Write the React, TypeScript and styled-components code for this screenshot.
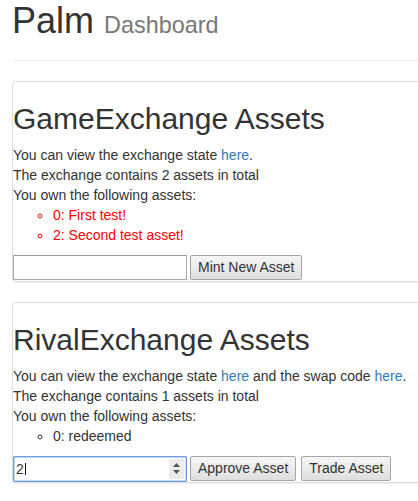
import React from "react";
import styled, { createGlobalStyle } from "styled-components";

const Global = createGlobalStyle`
  html, body { margin: 0; padding: 0; background: #fff; overflow: hidden; }
  body {
    font-family: "Liberation Sans", Arial, Helvetica, sans-serif;
    font-size: 14px;
    line-height: 20px;
    color: #333;
  }
  * { box-sizing: border-box; }
`;

const Container = styled.div`
  width: 760px;
  padding: 0 12px;
`;

const PageHeader = styled.div`
  padding-bottom: 9px;
  margin: 1px 0 20px;
  border-bottom: 1px solid #eee;
`;

const Title = styled.h1`
  margin: 0 0 10px;
  font-size: 36px;
  line-height: 1.1;
  font-weight: 500;
  color: #333;
`;

const Subtitle = styled.small`
  font-size: 65%;
  font-weight: 400;
  color: #777;
`;

const Panel = styled.section`
  background: #fff;
  border: 1px solid #ddd;
  border-radius: 4px;
  box-shadow: 0 1px 1px rgba(0, 0, 0, 0.05);
  margin-bottom: 20px;
`;

const PanelTitle = styled.h2`
  margin: 20px 0 10px;
  font-size: 30px;
  line-height: 1.1;
  font-weight: 500;
  color: #333;
`;

const Line = styled.div`
  line-height: 20px;
`;

const Link = styled.a`
  color: #337ab7;
  text-decoration: none;
`;

const AssetList = styled.ul`
  margin: 0 0 10px;
  padding-left: 40px;
  list-style-type: circle;
`;

const AssetItem = styled.li<{ $alert?: boolean }>`
  color: ${(p) => (p.$alert ? "#ff0000" : "#333")};
  line-height: 20px;
`;

const Controls = styled.div`
  display: flex;
  align-items: flex-start;
  height: 26px;
`;

const TextInput = styled.input`
  width: 174px;
  height: 25px;
  margin: 0 3px 0 0;
  padding: 1px 2px;
  border: 1px solid #a9a9a9;
  border-top-color: #999;
  font: inherit;
  color: #333;
  background: #fff;
  outline: none;
`;

const NumberBox = styled.div`
  width: 174px;
  height: 26px;
  margin-right: 3px;
  display: flex;
  align-items: center;
  border: 1px solid #6f9de2;
  box-shadow: inset 0 0 0 1px rgba(120, 165, 230, 0.45);
  border-radius: 1px;
  background: #fff;
  padding: 0 2px 0 2px;
`;

const NumberValue = styled.span`
  flex: 1;
  display: flex;
  align-items: center;
  font-size: 14px;
  color: #333;
`;

const Caret = styled.span`
  display: inline-block;
  width: 1px;
  height: 12px;
  margin-left: 1px;
  background: #111;
`;

const Spinner = styled.span`
  width: 15px;
  height: 20px;
  background: #ececec;
  display: flex;
  align-items: center;
  justify-content: center;
`;

const Button = styled.button<{ $gap?: number }>`
  height: 25px;
  margin: 0 ${(p) => p.$gap ?? 0}px 0 0;
  padding: 0 7px;
  font: inherit;
  font-size: 14px;
  color: #333;
  border: 1px solid #a6a6a6;
  border-radius: 2px;
  background: linear-gradient(#f6f6f6, #dedede);
  white-space: nowrap;
  cursor: pointer;
`;

const SpinIcon = () => (
  <svg width="9" height="13" viewBox="0 0 9 13">
    <path d="M4.5 1 L8 5 L1 5 Z" fill="#555" />
    <path d="M4.5 12 L8 8 L1 8 Z" fill="#555" />
  </svg>
);

export default function App() {
  return (
    <>
      <Global />
      <Container>
        <PageHeader>
          <Title>
            Palm <Subtitle>Dashboard</Subtitle>
          </Title>
        </PageHeader>

        <Panel>
          <PanelTitle>GameExchange Assets</PanelTitle>
          <Line>
            You can view the exchange state <Link href="#">here</Link>.
          </Line>
          <Line>The exchange contains 2 assets in total</Line>
          <Line>You own the following assets:</Line>
          <AssetList>
            <AssetItem $alert>0: First test!</AssetItem>
            <AssetItem $alert>2: Second test asset!</AssetItem>
          </AssetList>
          <Controls>
            <TextInput type="text" defaultValue="" />
            <Button>Mint New Asset</Button>
          </Controls>
        </Panel>

        <Panel>
          <PanelTitle>RivalExchange Assets</PanelTitle>
          <Line>
            You can view the exchange state <Link href="#">here</Link> and the
            swap code <Link href="#">here</Link>.
          </Line>
          <Line>The exchange contains 1 assets in total</Line>
          <Line>You own the following assets:</Line>
          <AssetList>
            <AssetItem>0: redeemed</AssetItem>
          </AssetList>
          <Controls>
            <NumberBox>
              <NumberValue>
                2<Caret />
              </NumberValue>
              <Spinner>
                <SpinIcon />
              </Spinner>
            </NumberBox>
            <Button $gap={5}>Approve Asset</Button>
            <Button>Trade Asset</Button>
          </Controls>
        </Panel>
      </Container>
    </>
  );
}
